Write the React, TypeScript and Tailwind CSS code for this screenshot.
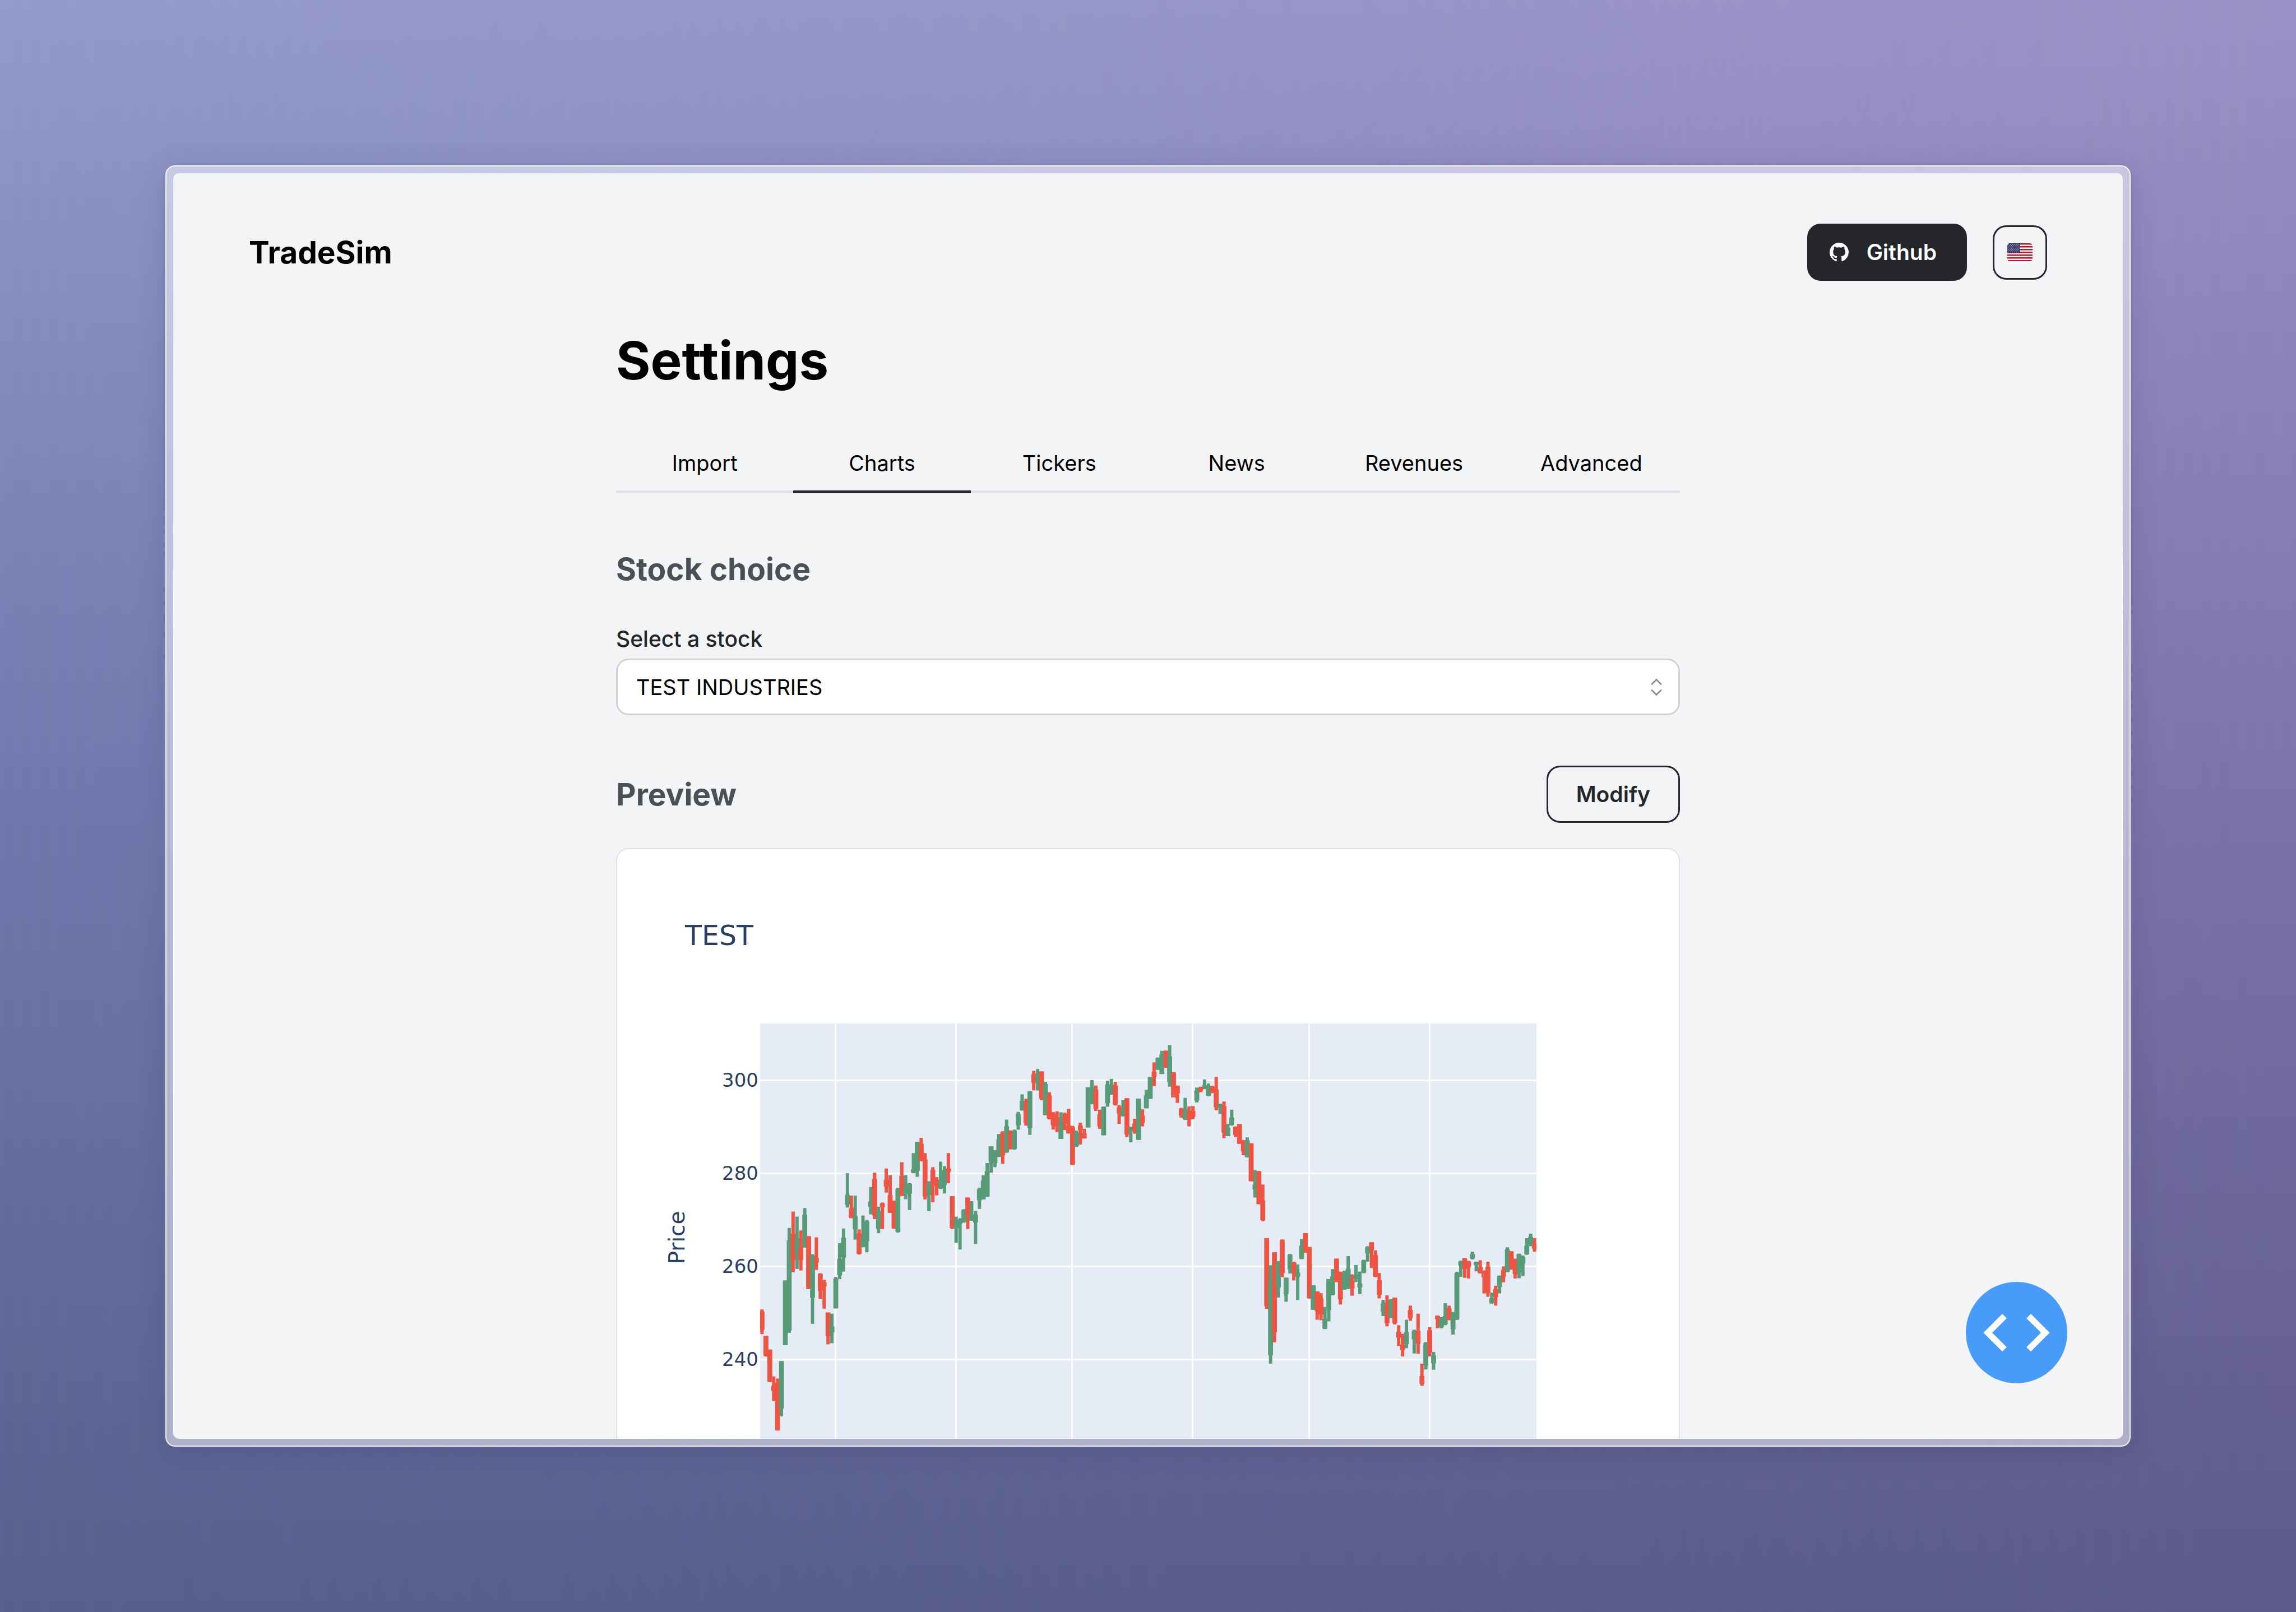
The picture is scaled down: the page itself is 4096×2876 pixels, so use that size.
import React, { useState } from "react";

const UP = "#599a78";
const DOWN = "#ec5444";

type Candle = ["u" | "d", number, number, number, number];

type Series = { top: number; unit: number; candles: Candle[] };

// Each candle: direction, high, body top, body bottom, low.
const SERIES: Series[] = [
  {
    top: 46,
    unit: 0.493,
    candles: [
      ["d", 1081, 1088, 1155, 1170], ["d", 1176, 1176, 1248, 1251], ["d", 1226, 1226, 1343, 1343],
      ["d", 1323, 1357, 1376, 1413], ["d", 1331, 1345, 1519, 1519], ["u", 1268, 1268, 1440, 1468],
      ["u", 976, 976, 1210, 1210], ["u", 786, 831, 1157, 1166], ["d", 727, 806, 902, 946],
      ["u", 745, 822, 880, 934], ["d", 795, 857, 902, 940], ["u", 714, 738, 857, 857],
      ["d", 816, 816, 1007, 1007], ["u", 881, 886, 1038, 1133], ["d", 820, 894, 911, 938],
      ["d", 950, 952, 1014, 1043], ["d", 974, 983, 998, 1078], ["d", 1092, 1092, 1178, 1207],
      ["u", 1096, 1142, 1164, 1203], ["u", 964, 969, 1077, 1077], ["u", 841, 898, 957, 971],
      ["u", 788, 821, 893, 944], ["u", 588, 667, 702, 712], ["d", 669, 714, 749, 751],
      ["u", 669, 743, 791, 828], ["d", 791, 806, 880, 882], ["u", 741, 820, 854, 856],
      ["u", 757, 763, 835, 874], ["u", 638, 690, 710, 737], ["d", 586, 609, 741, 754],
      ["u", 709, 726, 789, 805], ["d", 694, 697, 711, 790], ["d", 571, 612, 636, 658],
      ["d", 595, 667, 731, 731], ["d", 687, 687, 787, 789], ["u", 641, 645, 800, 803],
      ["d", 548, 597, 670, 670], ["u", 595, 641, 662, 682], ["u", 624, 626, 662, 721],
      ["u", 515, 573, 586, 588], ["u", 475, 475, 579, 601], ["d", 460, 481, 545, 545],
      ["d", 515, 538, 674, 683], ["u", 617, 619, 667, 725], ["d", 566, 576, 634, 693],
      ["d", 602, 612, 634, 668], ["u", 546, 612, 643, 645], ["u", 562, 576, 630, 661],
      ["d", 515, 571, 584, 624], ["d", 671, 671, 787, 790], ["u", 745, 760, 787, 840],
      ["u", 751, 755, 770, 864], ["u", 718, 720, 763, 767], ["d", 676, 676, 738, 790],
      ["u", 689, 738, 759, 760], ["u", 724, 738, 766, 844], ["u", 641, 646, 686, 717],
      ["u", 595, 615, 682, 683], ["u", 551, 580, 672, 674], ["u", 490, 490, 549, 586],
      ["u", 504, 508, 551, 566], ["u", 446, 465, 528, 529], ["d", 436, 440, 523, 554],
      ["u", 394, 418, 512, 514], ["d", 433, 435, 500, 502], ["u", 430, 434, 501, 503],
    ],
  },
  {
    top: 63,
    unit: 0.3594,
    candles: [
      ["u", 502, 512, 568, 590], ["u", 415, 447, 495, 495], ["d", 437, 465, 557, 570],
      ["u", 399, 399, 582, 616], ["d", 298, 315, 357, 395], ["u", 289, 312, 360, 396],
      ["d", 301, 301, 435, 444], ["u", 353, 363, 518, 518], ["d", 404, 420, 535, 539],
      ["d", 503, 513, 568, 590], ["d", 499, 527, 574, 602], ["u", 504, 553, 636, 636],
      ["d", 506, 512, 560, 592], ["d", 487, 570, 609, 609], ["d", 571, 577, 763, 766],
      ["u", 595, 605, 670, 675], ["d", 556, 570, 592, 664], ["d", 586, 608, 634, 634],
      ["u", 380, 380, 579, 579], ["u", 344, 380, 464, 464], ["d", 371, 392, 487, 497],
      ["d", 491, 514, 574, 586], ["u", 476, 476, 618, 618], ["u", 347, 366, 459, 476],
      ["u", 338, 366, 416, 417], ["d", 353, 372, 466, 470], ["d", 469, 478, 510, 561],
      ["u", 444, 488, 524, 524], ["d", 434, 434, 615, 627], ["u", 575, 578, 600, 653],
      ["d", 536, 560, 598, 610], ["u", 436, 436, 641, 641], ["d", 489, 520, 556, 574],
      ["u", 392, 420, 484, 484], ["u", 329, 329, 437, 437], ["d", 256, 302, 327, 374],
      ["u", 232, 234, 293, 293], ["u", 199, 217, 314, 314], ["d", 198, 198, 283, 283],
      ["u", 170, 226, 354, 377], ["d", 306, 306, 430, 430], ["d", 371, 373, 410, 457],
      ["d", 482, 486, 521, 531], ["u", 432, 488, 539, 542], ["d", 475, 505, 541, 574],
      ["d", 473, 498, 526, 538], ["u", 381, 396, 445, 455], ["d", 377, 381, 398, 404],
      ["u", 341, 370, 383, 389], ["u", 361, 372, 422, 424], ["d", 373, 377, 401, 409],
      ["d", 328, 390, 478, 494], ["u", 461, 461, 484, 512], ["d", 450, 472, 605, 632],
      ["u", 561, 581, 622, 622], ["u", 491, 530, 567, 570], ["d", 574, 576, 617, 628],
      ["d", 562, 562, 660, 660], ["d", 642, 644, 698, 717], ["u", 628, 643, 727, 727],
      ["d", 658, 658, 846, 846], ["u", 791, 862, 887, 927], ["d", 796, 796, 960, 960],
    ],
  },
  {
    top: 46,
    unit: 0.493,
    candles: [
      ["d", 629, 687, 758, 762], ["d", 823, 823, 1069, 1079], ["u", 921, 969, 1246, 1277],
      ["d", 874, 874, 1164, 1200], ["u", 906, 908, 1002, 1038], ["d", 828, 828, 949, 964],
      ["u", 966, 966, 1025, 1053], ["u", 880, 883, 935, 951], ["d", 908, 910, 951, 976],
      ["u", 918, 947, 962, 1047], ["u", 826, 850, 898, 899], ["d", 805, 805, 863, 876],
      ["d", 855, 855, 1040, 1042], ["u", 993, 993, 1082, 1082], ["d", 1016, 1016, 1087, 1118],
      ["d", 1022, 1041, 1100, 1120], ["u", 1072, 1115, 1151, 1152], ["u", 971, 971, 1083, 1124],
      ["u", 935, 961, 1027, 1030], ["d", 897, 897, 981, 982], ["d", 944, 946, 1044, 1063],
      ["u", 941, 951, 1008, 1010], ["u", 888, 934, 1005, 1007], ["d", 954, 980, 1005, 1031],
      ["u", 920, 957, 969, 982], ["u", 944, 987, 1001, 1025], ["u", 901, 903, 948, 950],
      ["u", 852, 854, 878, 908], ["d", 838, 838, 866, 931], ["d", 867, 884, 962, 964],
      ["d", 949, 975, 1028, 1041], ["u", 1046, 1059, 1089, 1105], ["d", 1030, 1056, 1130, 1142],
      ["u", 1043, 1046, 1112, 1113], ["d", 1038, 1038, 1130, 1135], ["d", 1138, 1161, 1182, 1213],
      ["d", 1169, 1208, 1228, 1251], ["u", 1118, 1162, 1206, 1221], ["d", 1067, 1083, 1112, 1122],
      ["u", 1154, 1159, 1189, 1240], ["d", 1096, 1159, 1205, 1241], ["d", 1277, 1322, 1350, 1357],
      ["u", 1199, 1202, 1284, 1298], ["d", 1145, 1156, 1237, 1251], ["u", 1235, 1247, 1276, 1299],
      ["d", 1103, 1104, 1116, 1149], ["u", 1109, 1117, 1146, 1149], ["u", 1058, 1105, 1135, 1138],
      ["d", 1067, 1077, 1119, 1120], ["u", 1090, 1093, 1154, 1172], ["u", 945, 949, 1117, 1119],
      ["u", 904, 907, 922, 963], ["d", 895, 896, 934, 966], ["d", 905, 907, 928, 969],
      ["u", 872, 880, 897, 900], ["u", 908, 910, 920, 943], ["d", 903, 927, 949, 951],
      ["d", 940, 941, 965, 1023], ["d", 908, 927, 1022, 1035], ["u", 1020, 1040, 1058, 1060],
      ["d", 995, 1007, 1036, 1067], ["u", 958, 960, 1000, 1023], ["d", 925, 938, 962, 983],
      ["u", 856, 863, 944, 946], ["d", 870, 871, 920, 937], ["d", 897, 899, 952, 969],
      ["u", 879, 881, 946, 968], ["u", 886, 891, 915, 960], ["u", 823, 850, 881, 883],
      ["u", 807, 818, 849, 852], ["d", 823, 842, 862, 872],
    ],
  },
];

const CANDLES = SERIES.flatMap(({ top, unit, candles }) =>
  candles.map(([dir, ...ys]) => ({ dir, ys: ys.map((y) => (y - top) * unit) })),
);

const PLOT_WIDTH = 1385;
const PLOT_HEIGHT = 760;
const DAY = PLOT_WIDTH / 200;
const MONTHS = [134, 349, 556, 771, 979, 1194];
const TICKS = [
  { label: "300", y: 101 },
  { label: "280", y: 267 },
  { label: "260", y: 433 },
  { label: "240", y: 599 },
];

function StockChart() {
  return (
    <svg
      viewBox="0 0 1894 1120"
      className="block w-full font-['DejaVu_Sans',Verdana,sans-serif]"
      fill="#2a3f5f"
      role="img"
      aria-label="TEST price chart"
    >
      <text x="121" y="171" fontSize="49">TEST</text>
      <text x="120" y="693" fontSize="39" textAnchor="middle" transform="rotate(-90 120 693)">Price</text>
      {TICKS.map((t) => (
        <text key={t.label} x="252" y={311 + t.y + 12} fontSize="34" textAnchor="end">{t.label}</text>
      ))}
      <svg x="255" y="311" width={PLOT_WIDTH} height={PLOT_HEIGHT}>
        <rect width={PLOT_WIDTH} height={PLOT_HEIGHT} fill="#e5ecf6" />
        {MONTHS.map((x) => (
          <rect key={x} x={x - 1} width="3" height={PLOT_HEIGHT} fill="#fff" />
        ))}
        {TICKS.map((t) => (
          <rect key={t.label} y={t.y - 1} width={PLOT_WIDTH} height="3" fill="#fff" />
        ))}
        {CANDLES.map(({ dir, ys: [high, top, bottom, low] }, i) => {
          const x = (i + 0.5) * DAY;
          return (
            <g key={i} fill={dir === "u" ? UP : DOWN}>
              <rect x={x - 3} y={high} width="6" height={low - high} />
              <rect x={x - 4.4} y={top} width="8.8" height={bottom - top} />
            </g>
          );
        })}
      </svg>
    </svg>
  );
}

function GithubMark() {
  return (
    <svg viewBox="0 0 16 16" className="size-[34px]" fill="currentColor" aria-hidden="true">
      <path d="M8 0C3.58 0 0 3.58 0 8c0 3.54 2.29 6.53 5.47 7.59.4.07.55-.17.55-.38 0-.19-.01-.82-.01-1.49-2.01.37-2.53-.49-2.69-.94-.09-.23-.48-.94-.82-1.13-.28-.15-.68-.52-.01-.53.63-.01 1.08.58 1.23.82.72 1.21 1.87.87 2.33.66.07-.52.28-.87.51-1.07-1.78-.2-3.64-.89-3.64-3.95 0-.87.31-1.59.82-2.15-.08-.2-.36-1.02.08-2.12 0 0 .67-.21 2.2.82.64-.18 1.32-.27 2-.27.68 0 1.36.09 2 .27 1.53-1.04 2.2-.82 2.2-.82.44 1.1.16 1.92.08 2.12.51.56.82 1.27.82 2.15 0 3.07-1.87 3.75-3.65 3.95.29.25.54.73.54 1.48 0 1.07-.01 1.93-.01 2.2 0 .21.15.46.55.38A8.013 8.013 0 0016 8c0-4.42-3.58-8-8-8z" />
    </svg>
  );
}

function UsFlag() {
  const stars: [number, number][] = [];
  for (let row = 0; row < 7; row++) {
    for (let col = 0; col < (row % 2 ? 5 : 6); col++) {
      stars.push([1.8 + col * 2.9 + (row % 2 ? 1.45 : 0), 1.6 + row * 1.8]);
    }
  }
  return (
    <svg viewBox="0 0 36 26" className="w-[45px]" aria-hidden="true">
      <clipPath id="flag-shape"><rect width="36" height="26" rx="4" /></clipPath>
      <g clipPath="url(#flag-shape)">
        <rect width="36" height="26" fill="#f4eeee" />
        {[0, 4, 8, 12, 16, 20, 24].map((y) => (
          <rect key={y} y={y} width="36" height="2" fill="#a51c30" />
        ))}
        <rect width="18" height="14" fill="#3c3b6e" />
        {stars.map(([x, y]) => (
          <circle key={`${x}-${y}`} cx={x} cy={y} r="0.5" fill="#fff" />
        ))}
      </g>
    </svg>
  );
}

const TABS = ["Import", "Charts", "Tickers", "News", "Revenues", "Advanced"];

function Tabs() {
  const [active, setActive] = useState("Charts");
  return (
    <div role="tablist" className="mt-[66px] grid grid-cols-6">
      {TABS.map((tab) => (
        <button
          key={tab}
          type="button"
          role="tab"
          aria-selected={tab === active}
          onClick={() => setActive(tab)}
          className={
            tab === active
              ? "border-b-[5px] border-[#25262b] pt-6 pb-[19px] text-[38px] leading-[60px]"
              : "border-b-[5px] border-[#dee2e6] pt-6 pb-[19px] text-[38px] leading-[60px]"
          }
        >
          {tab}
        </button>
      ))}
    </div>
  );
}

function Header() {
  return (
    <header className="flex items-center justify-between px-[135px] pt-[90px]">
      <span className="text-[55px] leading-[76px] font-bold">TradeSim</span>
      <div className="flex items-center gap-[46px]">
        <a
          href="#github"
          className="flex h-[102px] items-center gap-[32px] rounded-[24px] bg-[#25262b] pr-[54px] pl-[40px] text-[39px] leading-[60px] font-semibold text-white"
        >
          <GithubMark />
          Github
        </a>
        <button
          type="button"
          aria-label="Language: English"
          className="flex size-[97px] items-center justify-center rounded-[24px] border-3 border-[#25262b]"
        >
          <UsFlag />
        </button>
      </div>
    </header>
  );
}

function StockSelect() {
  return (
    <>
      <label htmlFor="stock" className="mt-[57px] block text-[39px] leading-[60px] font-medium text-[#212529]">
        Select a stock
      </label>
      <div className="relative mt-[5px]">
        <select
          id="stock"
          className="block h-[101px] w-full appearance-none rounded-[22px] border-3 border-[#ced4da] bg-white px-[33px] text-[38px] leading-[60px]"
        >
          <option>TEST INDUSTRIES</option>
        </select>
        <svg
          viewBox="0 0 20 32"
          className="pointer-events-none absolute top-1/2 right-[32px] w-[20px] -translate-y-1/2"
          fill="none"
          stroke="#868e96"
          strokeWidth="2.8"
          strokeLinecap="round"
          aria-hidden="true"
        >
          <path d="M2 10.5 10 2.5 18 10.5M2 21.5 10 29.5 18 21.5" />
        </svg>
      </div>
    </>
  );
}

function CodeButton() {
  return (
    <button type="button" aria-label="Open code" className="absolute right-[99px] bottom-[99px] size-[181px] rounded-full bg-[#499bf9]">
      <svg viewBox="0 0 225 225" fill="none" stroke="#fff" strokeWidth="13.7" aria-hidden="true">
        <path d="M85.8 75.8 48.7 112.7 85.8 149.6M139.2 75.8 176.3 112.7 139.2 149.6" />
      </svg>
    </button>
  );
}

export default function App() {
  return (
    <div className="relative h-screen overflow-hidden bg-linear-to-b from-[#939bcb] via-[#6f79ad] to-[#56618d] p-[295px] font-[Inter,sans-serif] text-black">
      <div className="absolute inset-0 bg-linear-to-b from-[#9c91c6] via-[#7d72a9] to-[#5c5a89] mask-r-from-0% mask-r-to-100% -scale-x-100" />
      <div className="relative h-full rounded-[17px] border-2 border-white/80 bg-white/50 p-3 shadow-[0_8px_50px_rgba(40,40,90,0.16)]">
        <div className="relative h-full overflow-hidden rounded-[10px] bg-[#f3f4f6]">
          <Header />
          <main className="mx-auto mt-[79px] max-w-[1898px]">
            <h1 className="text-[94px] leading-[126px] font-bold">Settings</h1>
            <Tabs />
            <h2 className="mt-[97px] text-[55px] leading-[76px] font-bold text-[#495057]">Stock choice</h2>
            <StockSelect />
            <div className="mt-[90px] flex items-center justify-between">
              <h2 className="text-[55px] leading-[76px] font-bold text-[#495057]">Preview</h2>
              <button
                type="button"
                className="h-[102px] rounded-[24px] border-3 border-[#25262b] px-[50px] text-[39px] leading-[60px] font-semibold text-[#25262b]"
              >
                Modify
              </button>
            </div>
            <section className="mt-[45px] overflow-hidden rounded-[22px] border-2 border-[#dee2e6] bg-white">
              <StockChart />
            </section>
          </main>
          <CodeButton />
        </div>
      </div>
    </div>
  );
}
